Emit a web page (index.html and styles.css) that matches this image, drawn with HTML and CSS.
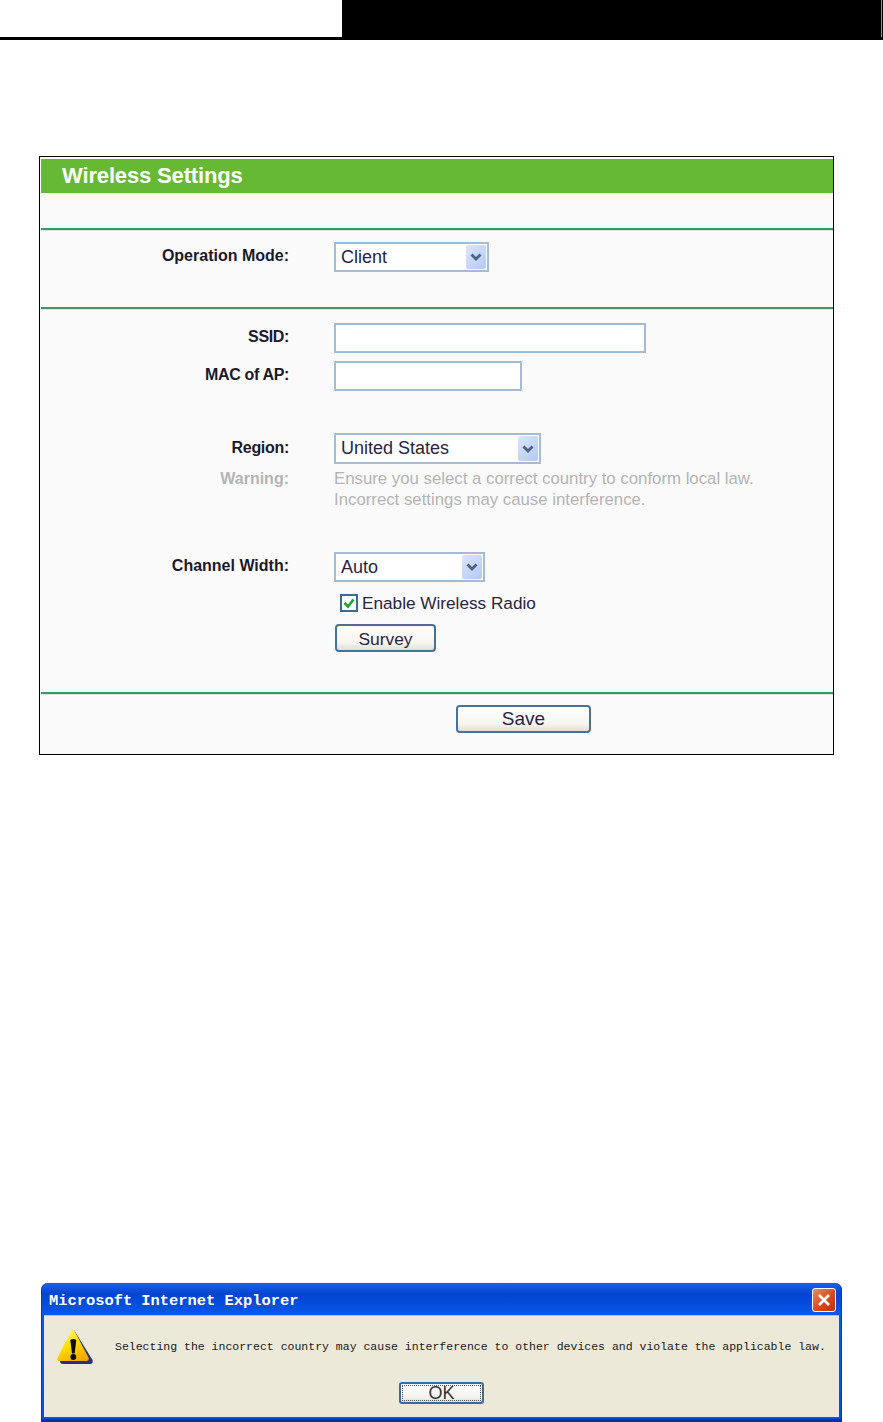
FILE: index.html
```html
<!DOCTYPE html>
<html>
<head>
    <link rel="stylesheet" href="styles.css">
</head>
<body>
    <div class="page-head">
        <div class="head-blank"></div>
        <div class="head-dark"></div>
    </div>

    <div class="panel">
        <div class="panel-title">Wireless Settings</div>
        <div class="section section-blank"></div>

        <div class="section section-mode">
            <div class="row">
                <label class="row-label">Operation Mode:</label>
                <div class="select select-client">
                    <span>Client</span>
                    <span class="select-arrow"><svg width="12" height="8" viewBox="0 0 12 8"><path d="M1.500 1.500 6 6 10.500 1.500" fill="none" stroke="#4d6185" stroke-width="2.800"/></svg></span>
                </div>
            </div>
        </div>

        <div class="section section-form">
            <div class="row">
                <label class="row-label label-tight">SSID:</label>
                <input class="text-input input-ssid" type="text">
            </div>
            <div class="row row-mac">
                <label class="row-label label-tight">MAC of AP:</label>
                <input class="text-input input-mac" type="text">
            </div>
            <div class="row row-region">
                <label class="row-label label-region">Region:</label>
                <div class="select select-region">
                    <span>United States</span>
                    <span class="select-arrow"><svg width="12" height="8" viewBox="0 0 12 8"><path d="M1.500 1.500 6 6 10.500 1.500" fill="none" stroke="#4d6185" stroke-width="2.800"/></svg></span>
                </div>
            </div>
            <div class="row row-warning">
                <label class="row-label label-warning">Warning:</label>
                <p class="warning-text">Ensure you select a correct country to conform local law.<br>Incorrect settings may cause interference.</p>
            </div>
            <div class="row row-channel">
                <label class="row-label">Channel Width:</label>
                <div class="select select-channel">
                    <span>Auto</span>
                    <span class="select-arrow"><svg width="12" height="8" viewBox="0 0 12 8"><path d="M1.500 1.500 6 6 10.500 1.500" fill="none" stroke="#4d6185" stroke-width="2.800"/></svg></span>
                </div>
            </div>
            <div class="check-row">
                <span class="check-box"><svg width="14" height="14" viewBox="0 0 14 14"><path d="M2.500 7 6 10.500 11.500 3.500" fill="none" stroke="#22a32a" stroke-width="2.600"/></svg></span>
                <span>Enable Wireless Radio</span>
            </div>
            <button class="btn btn-survey">Survey</button>
        </div>

        <div class="section section-save">
            <button class="btn btn-save">Save</button>
        </div>
    </div>

    <div class="dialog">
        <div class="dialog-title">
            <span class="dialog-caption">Microsoft Internet Explorer</span>
            <span class="dialog-close"><svg width="14" height="14" viewBox="0 0 14 14"><path d="M2 2 12 12M12 2 2 12" stroke="#fff" stroke-width="2.600"/></svg></span>
        </div>
        <div class="dialog-body">
            <div class="dialog-message">
                <svg class="warn-icon" width="36" height="36" viewBox="0 0 36 36">
                    <defs>
                        <linearGradient id="warnFill" x1="0.200" y1="0" x2="0.700" y2="1">
                            <stop offset="0" stop-color="#fff6a0"/>
                            <stop offset="0.450" stop-color="#ffe000"/>
                            <stop offset="1" stop-color="#f0a800"/>
                        </linearGradient>
                    </defs>
                    <path d="M17 1 35.500 31 Q36.500 35 33 35 H6 Q3 35 3 32 Z" fill="#2c2f70"/>
                    <path d="M14.500 1 Q15.700 -0.500 17 1 L31.500 28.500 Q32.500 32 29.500 32 H2 Q-0.500 32 0.500 29 Z" fill="url(#warnFill)"/>
                    <path d="M13.300 11 Q16.300 8.800 19.300 11 L17.600 24.500 H15 Z" fill="#0c0c0c"/>
                    <circle cx="16.300" cy="28" r="2.900" fill="#0c0c0c"/>
                </svg>
                <p>Selecting the incorrect country may cause interference to other devices and violate the applicable law.</p>
            </div>
            <div class="dialog-actions">
                <button class="btn-ok"><span>OK</span></button>
            </div>
        </div>
    </div>
</body>
</html>
```

FILE: styles.css
```css
* {
    margin: 0;
    padding: 0;
    box-sizing: border-box;
}

html, body {
    height: 1422px;
    overflow: hidden;
}

body {
    background: #ffffff;
    font-family: "Liberation Sans", Arial, sans-serif;
    color: #1a1a2a;
}

.page-head {
    display: flex;
    height: 40px;
    border-bottom: 3px solid #000000;
}

.head-blank {
    width: 342px;
}

.head-dark {
    flex: 1;
    background: #000000;
    position: relative;
}

.head-dark::after {
    content: '';
    position: absolute;
    top: 0;
    right: 1px;
    width: 1px;
    height: 100%;
    background: #8c8c8c;
}

.panel {
    width: 795px;
    height: 599px;
    margin: 116px 0 0 39px;
    border: 1px solid #000000;
    padding: 2px 0 0 1px;
    background: #fafafa;
}

.panel-title {
    height: 34px;
    padding-left: 21px;
    background: #66b933;
    color: #ffffff;
    font-size: 22px;
    font-weight: bold;
    line-height: 34px;
    letter-spacing: -0.15px;
}

.section {
    border-bottom: 2px solid #43936a;
    box-shadow: 0 1px 0 #d3e8da;
}

.section-blank {
    height: 37px;
}

.section-mode {
    height: 79px;
    padding-top: 12px;
}

.section-form {
    height: 385px;
    padding-top: 14px;
}

.section-save {
    height: 60px;
    padding: 11px 0 0 415px;
    border-bottom: 0;
    box-shadow: none;
}

.row {
    display: grid;
    grid-template-columns: 248px 1fr;
    column-gap: 45px;
    align-items: start;
}

.row-label {
    font-size: 16px;
    font-weight: bold;
    line-height: 28px;
    text-align: right;
}

.label-tight {
    letter-spacing: -0.35px;
}

.label-region {
    line-height: 29px;
    letter-spacing: -0.3px;
}

.label-warning {
    line-height: 21px;
}

.row-mac {
    margin-top: 8px;
}

.row-region {
    margin-top: 42px;
}

.row-warning {
    margin-top: 4px;
    color: #b4b4b4;
}

.row-channel {
    margin-top: 42px;
}

.warning-text {
    font-size: 16.8px;
    line-height: 21px;
    white-space: nowrap;
}

.text-input {
    display: block;
    height: 30px;
    background: #ffffff;
    border: 2px solid #a5bbd3;
}

.input-ssid {
    width: 312px;
}

.input-mac {
    width: 188px;
}

.select {
    display: flex;
    align-items: center;
    justify-content: space-between;
    height: 30px;
    padding: 1px 1px 1px 5px;
    background: #ffffff;
    border: 2px solid #a5bbd3;
    font-size: 18px;
    color: #2a2440;
}

.select-client {
    width: 155px;
}

.select-region {
    width: 207px;
    height: 31px;
}

.select-channel {
    width: 151px;
}

.select-arrow {
    display: flex;
    align-items: center;
    justify-content: center;
    width: 20px;
    height: 100%;
    border-radius: 2px;
    background: linear-gradient(135deg, #dbe6fb, #b3c8f5);
}

.check-row {
    display: flex;
    align-items: center;
    gap: 4px;
    margin: 12px 0 0 299px;
    font-size: 17.2px;
    line-height: 18px;
    color: #2a2440;
}

.check-box {
    display: flex;
    align-items: center;
    justify-content: center;
    width: 18px;
    height: 18px;
    background: #fafcff;
    border: 2px solid #3c6a90;
}

.btn {
    display: block;
    height: 28px;
    background: linear-gradient(#ffffff, #f6f5f0 70%, #e2dfd2);
    border: 2px solid #47709a;
    border-radius: 4px;
    font-family: inherit;
    color: #2a2440;
}

.btn-survey {
    width: 101px;
    margin: 12px 0 0 294px;
    padding-top: 2px;
    font-size: 17.4px;
}

.btn-save {
    width: 135px;
    font-size: 19px;
}

.dialog {
    width: 801px;
    height: 139px;
    margin: 528px 0 0 41px;
    padding: 0 3px;
    border-radius: 7px 7px 0 0;
    background: linear-gradient(#1d62e2, #0344d0 8%, #0753e6 20%, #0a58ee 22%, #0a50e0);
    box-shadow: inset 0 -3px 0 #0a2fa8, inset 1px 0 0 #0738c8, inset -1px 0 0 #0738c8;
}

.dialog-title {
    display: flex;
    align-items: center;
    justify-content: space-between;
    height: 32px;
    padding: 0 3px 0 5px;
    font-family: "Liberation Mono", monospace;
    font-size: 15.4px;
    font-weight: bold;
    color: #ffffff;
}

.dialog-caption {
    margin-top: 3px;
}

.dialog-close {
    display: flex;
    align-items: center;
    justify-content: center;
    width: 24px;
    height: 24px;
    margin-top: 1px;
    border: 1px solid #ffffff;
    border-radius: 3px;
    background: linear-gradient(135deg, #eb8a68, #d9481f 55%, #b93412);
}

.dialog-body {
    height: 102px;
    background: #ece9d8;
    border-top: 1px solid #a8c4ee;
}

.dialog-message {
    display: flex;
    align-items: flex-start;
    gap: 22px;
    padding: 13px 0 0 13px;
    height: 66px;
}

.dialog-message p {
    margin-top: 10px;
    font-family: "Liberation Mono", monospace;
    font-size: 11.5px;
    line-height: 16px;
    white-space: nowrap;
    color: #1a1a1a;
}

.dialog-actions {
    display: flex;
    justify-content: center;
}

.btn-ok {
    width: 85px;
    height: 22px;
    padding: 1px;
    border: 2px solid #44689e;
    border-radius: 3px;
    background: linear-gradient(#ffffff, #f4f3ee 75%, #dcd9cc);
    font-family: "Liberation Sans", sans-serif;
    font-size: 18px;
    font-weight: normal;
    color: #333333;
}

.btn-ok span {
    display: block;
    height: 100%;
    line-height: 15px;
    border: 1px dotted #555555;
}
```
